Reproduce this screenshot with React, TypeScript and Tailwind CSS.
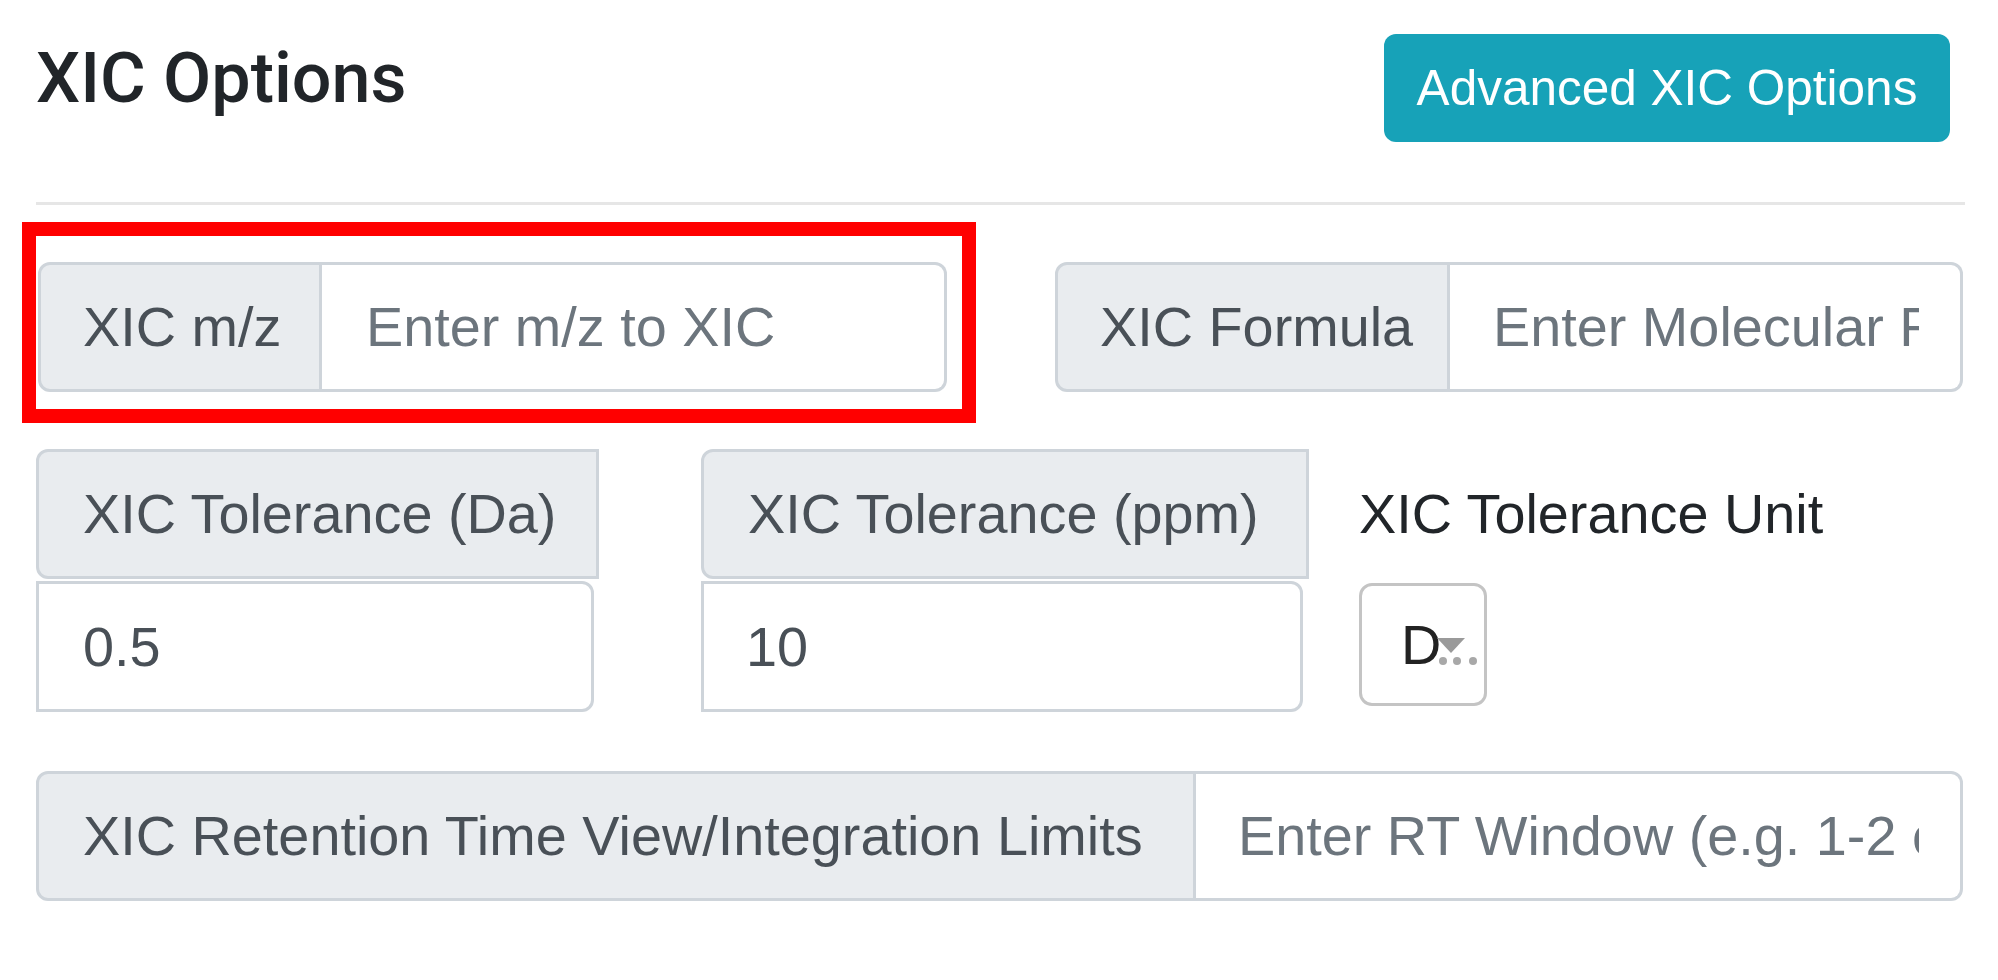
import React from "react";

const labelCls =
  "flex items-center bg-[#e9ecef] border-[3px] border-[#ced4da] text-[#495057] whitespace-nowrap";
const inputCls =
  "min-w-0 bg-white border-[3px] border-[#ced4da] text-[#495057] placeholder:text-[#6c757d] outline-none text-[55.8px] font-['Liberation_Sans',Arial,sans-serif]";

export default function App() {
  return (
    <div className="w-[1998px] h-[980px] bg-white pl-[36px] pr-[35px] font-['Liberation_Sans',Arial,sans-serif] text-[55.8px] text-[#212529] overflow-hidden">
      {/* Header */}
      <div className="flex justify-between items-start pt-[34px]">
        <h4 className="mt-[9px] font-['Roboto',sans-serif] font-medium text-[70px] leading-[70px] text-[#212529]">
          XIC Options
        </h4>
        <button className="mr-[13px] h-[108px] w-[566px] rounded-[12px] bg-[#17a2b8] text-white text-[49.5px] leading-none flex items-center justify-center">
          Advanced XIC Options
        </button>
      </div>

      {/* Divider */}
      <div className="mt-[60px] h-[3px] w-[1929px] bg-[#e6e6e6]" />

      {/* Row 1 */}
      <div className="mt-[57px] flex">
        <div className="relative ml-[2px] flex h-[130px] w-[909px]">
          <div className={`${labelCls} w-[284px] rounded-l-[12px] pl-[42px]`}>XIC m/z</div>
          <input
            className={`${inputCls} flex-1 border-l-0 rounded-r-[12px] pl-[44px] pr-[44px]`}
            placeholder="Enter m/z to XIC"
          />
          <div className="pointer-events-none absolute left-[-16px] top-[-40px] h-[201px] w-[954px] border-[14px] border-[#ff0000]" />
        </div>
        <div className="ml-auto flex h-[130px] w-[908px]">
          <div className={`${labelCls} w-[395px] rounded-l-[12px] pl-[42px]`}>XIC Formula</div>
          <input
            className={`${inputCls} flex-1 border-l-0 rounded-r-[12px] pl-[43px] pr-[41px]`}
            placeholder="Enter Molecular Formula"
          />
        </div>
      </div>

      {/* Row 2 */}
      <div className="mt-[57px] flex items-start">
        <div className="w-[563px]">
          <div className={`${labelCls} h-[130px] w-[563px] rounded-l-[12px] pl-[44px]`}>
            XIC Tolerance (Da)
          </div>
          <input
            className={`${inputCls} mt-[2px] block h-[131px] w-[558px] rounded-r-[12px] pl-[44px] text-[#495057]`}
            defaultValue="0.5"
          />
        </div>
        <div className="ml-[102px] w-[608px]">
          <div className={`${labelCls} h-[130px] w-[608px] rounded-l-[12px] pl-[44px]`}>
            XIC Tolerance (ppm)
          </div>
          <input
            className={`${inputCls} mt-[2px] block h-[131px] w-[602px] rounded-r-[12px] pl-[42px] text-[#495057]`}
            defaultValue="10"
          />
        </div>
        <div className="ml-[50px]">
          <div className="flex h-[130px] items-center whitespace-nowrap text-[#212529]">
            XIC Tolerance Unit
          </div>
          <div className="mt-[4px] flex h-[123px] w-[128px] items-center rounded-[13px] border-[3px] border-[#c4c4c4] bg-white pl-[39px] text-[#222222]">
            <span>D</span>
            <svg
              className="ml-[-8px] mt-[13px] shrink-0 overflow-visible"
              width="46"
              height="30"
              viewBox="0 0 46 30"
            >
              <polygon points="4,2 32,2 18,17" fill="#9a9a9a" />
              <circle cx="10" cy="25" r="4" fill="#a8a8a8" />
              <circle cx="24" cy="25" r="4" fill="#a8a8a8" />
              <circle cx="40" cy="25" r="4" fill="#a8a8a8" />
            </svg>
          </div>
        </div>
      </div>

      {/* Row 3 */}
      <div className="mt-[59px] flex h-[130px] w-[1927px]">
        <div className={`${labelCls} w-[1160px] rounded-l-[12px] pl-[44px]`}>
          XIC Retention Time View/Integration Limits
        </div>
        <input
          className={`${inputCls} flex-1 border-l-0 rounded-r-[12px] pl-[42px] pr-[41px]`}
          placeholder="Enter RT Window (e.g. 1-2 or 5-10)"
        />
      </div>
    </div>
  );
}
